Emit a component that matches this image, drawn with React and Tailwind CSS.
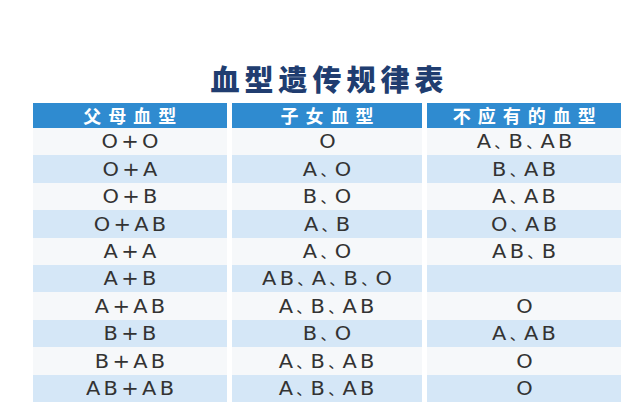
const rows = [
  ["O+O", "O", "A、B、AB"],
  ["O+A", "A、O", "B、AB"],
  ["O+B", "B、O", "A、AB"],
  ["O+AB", "A、B", "O、AB"],
  ["A+A", "A、O", "AB、B"],
  ["A+B", "AB、A、B、O", ""],
  ["A+AB", "A、B、AB", "O"],
  ["B+B", "B、O", "A、AB"],
  ["B+AB", "A、B、AB", "O"],
  ["AB+AB", "A、B、AB", "O"],
];

const cjk = { fontFamily: '"Noto Sans CJK SC", sans-serif' };
const latin = { fontFamily: '"DejaVu Sans", "Noto Sans CJK SC", sans-serif' };

function Value({ text }) {
  const parts = text.split("、");
  return parts.map((p, i) => (
    <span key={i}>
      {p}
      {i < parts.length - 1 && (
        <span className="inline-block w-[13px] tracking-normal text-[14px] text-left">、</span>
      )}
    </span>
  ));
}

function Cell({ text, shaded, width }) {
  return (
    <div
      className={`flex items-center justify-center h-full text-[19px] tracking-[3px] text-[#333333] ${width} ${
        shaded ? "bg-[#d5e7f7]" : "bg-[#f6f8fa]"
      }`}
      style={latin}
    >
      <span className="pl-[3px] scale-x-110 inline-block">
        <Value text={text} />
      </span>
    </div>
  );
}

export default function App() {
  return (
    <div className="w-[640px] h-[417px] bg-white overflow-hidden">
      <div className="pt-[61px] pl-[33px] w-[621px]">
        <h1
          className="text-center text-[29px] leading-[34px] font-black tracking-[5px] text-[#203d70] pl-[5px]"
          style={cjk}
        >
          血型遗传规律表
        </h1>

        <div className="mt-[8px] flex flex-col">
          <div className="flex gap-x-[5px] h-[25px]">
            {["父母血型", "子女血型", "不应有的血型"].map((h, i) => (
              <div
                key={h}
                className={`flex items-center justify-center bg-[#2f8bd0] text-white font-bold text-[18px] tracking-[7px] ${
                  i === 1 ? "w-[191px]" : "w-[194px]"
                }`}
                style={cjk}
              >
                <span className="pl-[7px]">{h}</span>
              </div>
            ))}
          </div>

          {rows.map((r, i) => (
            <div key={r[0]} className="flex gap-x-[5px] h-[27.4px]">
              <Cell shaded={i % 2 === 1} width="w-[194px]" text={r[0]} />
              <Cell shaded={i % 2 === 1} width="w-[191px]" text={r[1]} />
              <Cell shaded={i % 2 === 1} width="w-[194px]" text={r[2]} />
            </div>
          ))}
        </div>
      </div>
    </div>
  );
}
